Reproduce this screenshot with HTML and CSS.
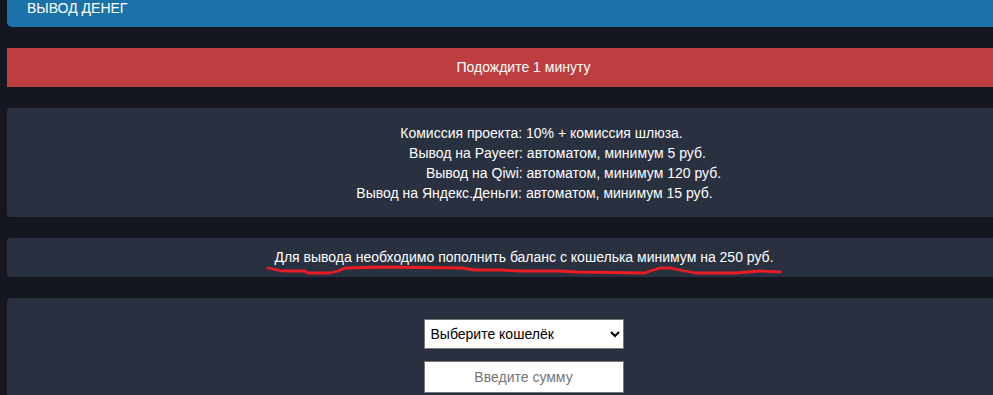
FILE: index.html
```html
<!DOCTYPE html>
<html lang="ru">
<head>
  <meta charset="UTF-8" />
  <meta name="viewport" content="width=device-width, initial-scale=1.0"/>
  <title>Вывод денег</title>
  <link rel="stylesheet" href="styles.css">
</head>
<body>
  <div class="page">
    <div class="page-title">ВЫВОД ДЕНЕГ</div>

    <div class="alert">Подождите 1 минуту</div>

    <div class="panel info">
      <div class="line l1">Комиссия проекта: 10% + комиссия шлюза.</div>
      <div class="line l2">Вывод на Payeer: автоматом, минимум 5 руб.</div>
      <div class="line l3">Вывод на Qiwi: автоматом, минимум 120 руб.</div>
      <div class="line l4">Вывод на Яндекс.Деньги: автоматом, минимум 15 руб.</div>
    </div>

    <div class="panel notice">
      <span>Для вывода необходимо пополнить баланс с кошелька минимум на 250 руб.</span>
      <!-- hand drawn underline -->
      <svg class="scribble" width="1033" height="40" viewBox="0 0 1033 40">
        <path d="M261 30 L275 33 L298 33 L301 35 L323 35 L331 33 L338 30 L375 29 L455 30 L468 32 L493 32 L513 33 L553 33 L570 34 L638 35 L643 33 L653 30 L663 30 L678 33 L688 35 L730 35 L741 34 L753 33 L773 34"
              fill="none" stroke="#ec1c24" stroke-width="2.8" stroke-linecap="round" stroke-linejoin="round"/>
      </svg>
    </div>

    <div class="panel form">
      <select class="field">
        <option>Выберите кошелёк</option>
        <option>Payeer</option>
        <option>Qiwi</option>
        <option>Яндекс.Деньги</option>
      </select>
      <input class="field amount" type="text" placeholder="Введите сумму">
    </div>
  </div>
</body>
</html>
```

FILE: styles.css
```css
html, body {
  margin: 0;
  height: 100%;
  overflow: hidden;
}

body {
  background: #14171f;
  color: #fff;
  font-family: "Liberation Sans", Arial, sans-serif;
  font-size: 14px;
}

.page {
  margin-left: 7px;
  width: 1033px;
}

.page-title {
  background: #1b72a9;
  height: 27px;
  line-height: 16px;
  padding-left: 20px;
  border-bottom-left-radius: 5px;
  margin-bottom: 21px;
}

.alert {
  background: #bc3e40;
  height: 39px;
  line-height: 39px;
  text-align: center;
  margin-bottom: 21px;
}

.panel {
  background: #29303f;
  border-radius: 4px;
  margin-bottom: 21px;
}

.info {
  height: 109px;
  box-sizing: border-box;
  padding-top: 15px;
  line-height: 20px;
}

.line {
  text-align: center;
}

.l1 { padding-left: 36px; }
.l2 { padding-left: 68px; }
.l3 { padding-left: 100px; }
.l4 { padding-left: 22px; }

.notice {
  position: relative;
  height: 39px;
  line-height: 39px;
  text-align: center;
  padding-left: 1px;
  box-sizing: border-box;
}

.scribble {
  position: absolute;
  left: 0;
  top: 0;
  pointer-events: none;
}

.form {
  display: flex;
  flex-direction: column;
  align-items: center;
  gap: 12px;
  padding-top: 21px;
  height: 76px;
  margin-bottom: 0;
  border-bottom-left-radius: 0;
}

.field {
  width: 200px;
  height: 30px;
  box-sizing: border-box;
  border: 1px solid #767676;
  background: #fff;
  font-family: "Liberation Sans", Arial, sans-serif;
  font-size: 14px;
  color: #000;
}

select.field {
  padding-left: 2px;
}

.amount {
  height: 32px;
  text-align: center;
}

.amount::placeholder {
  color: #757575;
}
```
